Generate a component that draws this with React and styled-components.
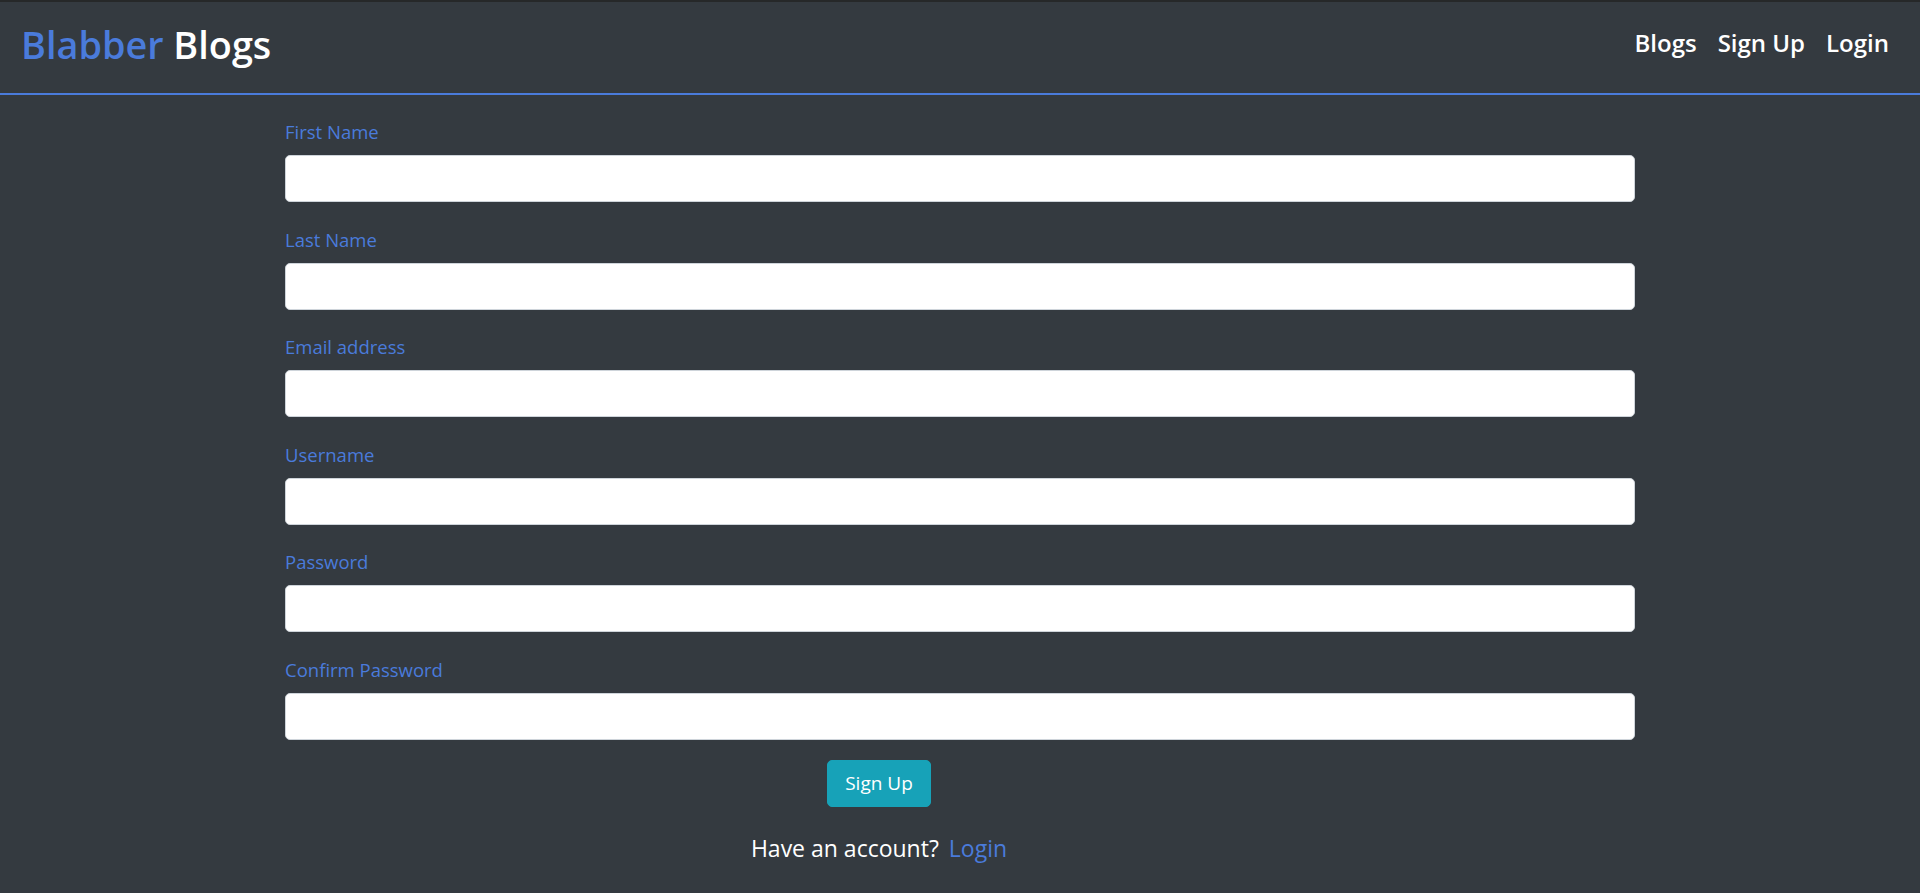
import React from "react";
import styled, { createGlobalStyle } from "styled-components";

const BLUE = "#4a7bdb";

const Global = createGlobalStyle`
  * { box-sizing: border-box; }
  html, body { margin: 0; padding: 0; background: #343a40; }
  body {
    min-height: 100vh;
    font-family: "Open Sans", "Noto Sans", sans-serif;
    color: #fff;
  }
`;

const Page = styled.div`
  min-height: 100vh;
  background: #343a40;
`;

const Header = styled.header`
  height: 95px;
  border-top: 2px solid #262829;
  border-bottom: 2px solid ${BLUE};
  display: flex;
  align-items: flex-start;
  justify-content: space-between;
  padding: 19.5px 31px 0 21px;
`;

const Brand = styled.a`
  font-size: 37.8px;
  line-height: 1.2;
  font-weight: 600;
  color: #fff;
  text-decoration: none;
  white-space: nowrap;
`;

const BrandAccent = styled.span`
  color: ${BLUE};
`;

const Nav = styled.nav`
  display: flex;
  gap: 21px;
  margin-top: 3.5px;
`;

const NavLink = styled.a`
  font-size: 24px;
  line-height: 1.5;
  font-weight: 600;
  color: #fff;
  text-decoration: none;
`;

const Form = styled.form`
  width: 1350px;
  margin: 0 auto;
  padding-top: 23px;
`;

const Group = styled.div`
  margin-bottom: ${(p) => (p.$last ? "20px" : "23.6px")};
`;

const Label = styled.label`
  display: block;
  font-size: 18.5px;
  line-height: 27px;
  color: ${BLUE};
  margin-bottom: 10px;
`;

const Input = styled.input`
  display: block;
  width: 100%;
  height: 47px;
  border: 1px solid #ced4da;
  border-radius: 5px;
  background: #fff;
  padding: 0 16px;
  font-family: inherit;
  font-size: 18px;
  outline: none;
`;

const Actions = styled.div`
  display: flex;
  flex-direction: column;
  align-items: center;
  padding-right: 162px;
`;

const Button = styled.button`
  height: 47px;
  padding: 0 17px;
  background: #17a2b8;
  border: 1px solid #17a2b8;
  border-radius: 5px;
  color: #fff;
  font-family: inherit;
  font-size: 19px;
  cursor: pointer;
`;

const Footer = styled.p`
  margin: 24px 0 0;
  font-size: 23px;
  line-height: 1.5;
  color: #fff;
`;

const FooterLink = styled.a`
  color: ${BLUE};
  text-decoration: none;
  margin-left: 10px;
`;

const fields = [
  { label: "First Name", type: "text" },
  { label: "Last Name", type: "text" },
  { label: "Email address", type: "email" },
  { label: "Username", type: "text" },
  { label: "Password", type: "password" },
  { label: "Confirm Password", type: "password" },
];

export default function App() {
  return (
    <Page>
      <Global />
      <Header>
        <Brand href="#">
          <BrandAccent>Blabber</BrandAccent> Blogs
        </Brand>
        <Nav>
          <NavLink href="#">Blogs</NavLink>
          <NavLink href="#">Sign Up</NavLink>
          <NavLink href="#">Login</NavLink>
        </Nav>
      </Header>
      <Form onSubmit={(e) => e.preventDefault()}>
        {fields.map((f, i) => (
          <Group key={f.label} $last={i === fields.length - 1}>
            <Label>{f.label}</Label>
            <Input type={f.type} />
          </Group>
        ))}
        <Actions>
          <Button type="submit">Sign Up</Button>
          <Footer>
            Have an account?<FooterLink href="#">Login</FooterLink>
          </Footer>
        </Actions>
      </Form>
    </Page>
  );
}
